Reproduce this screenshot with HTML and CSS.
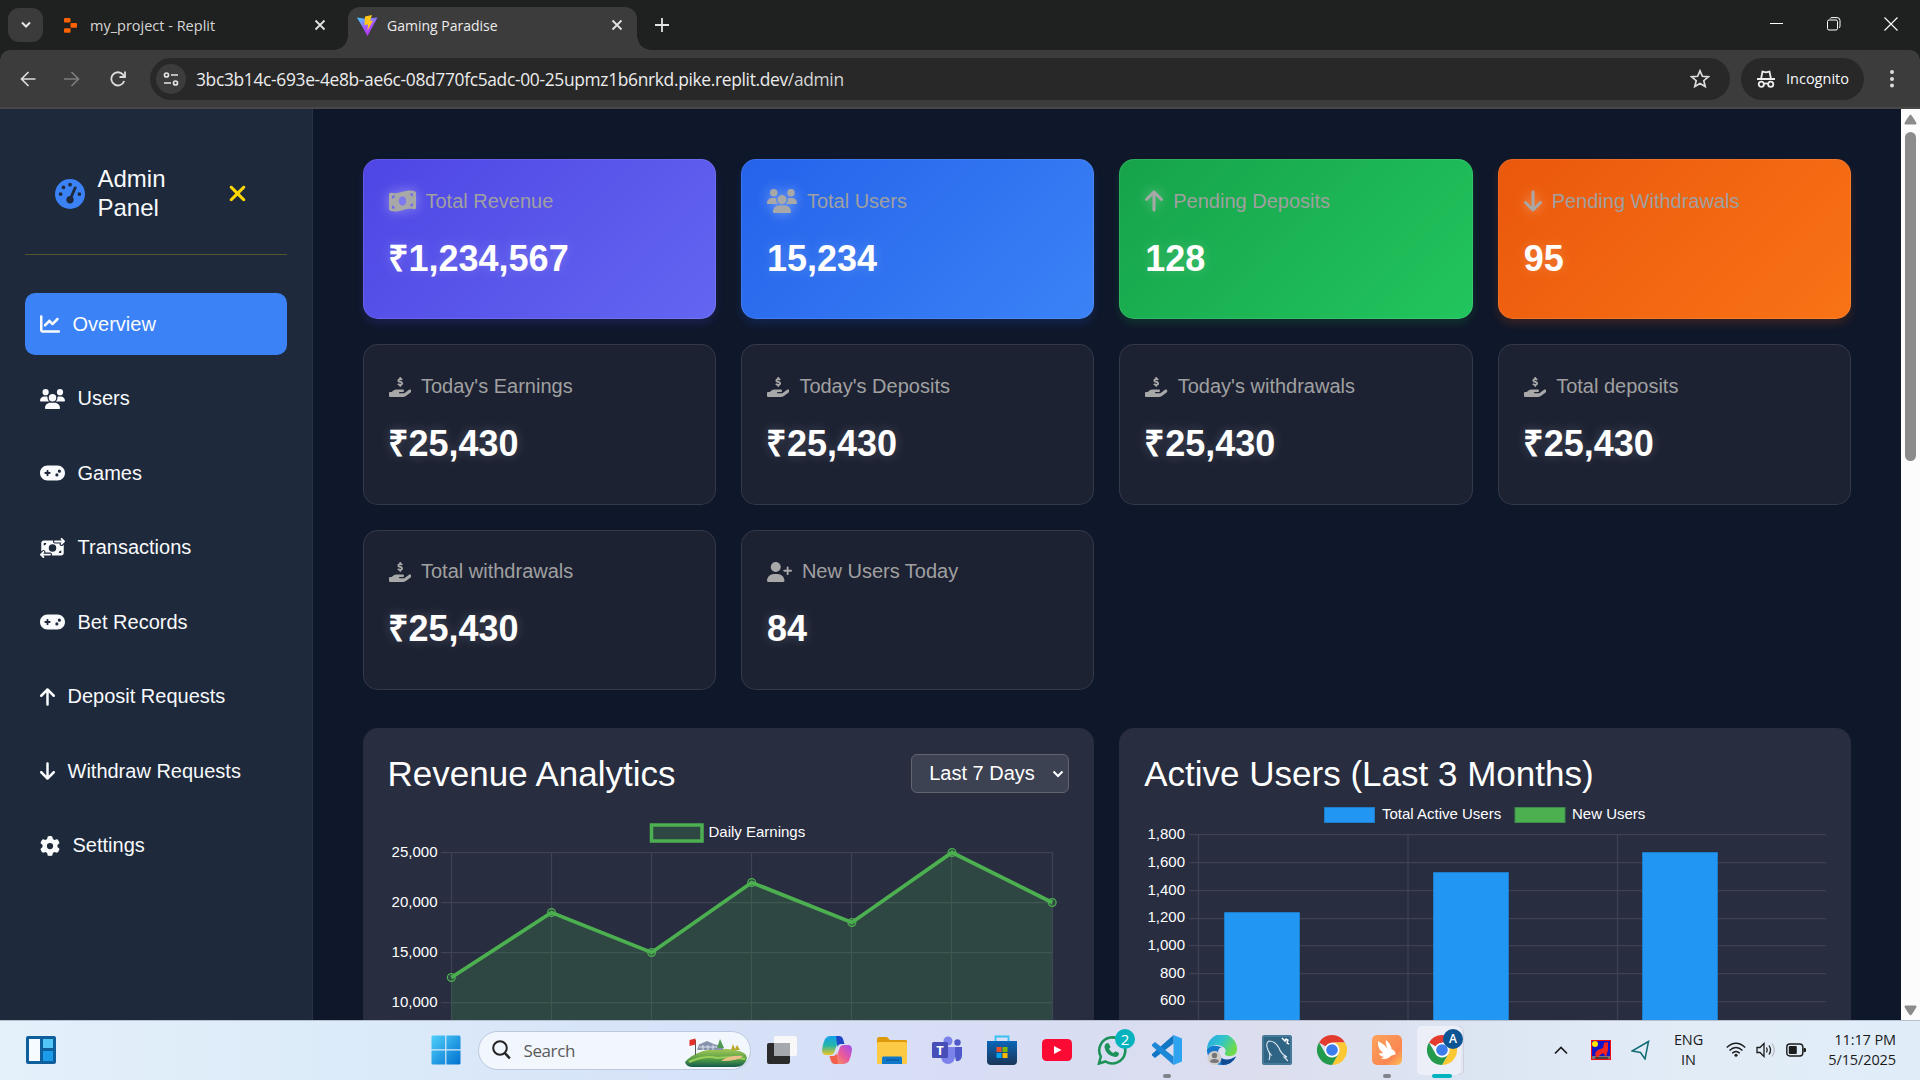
FILE: index.html
```html
<!DOCTYPE html>
<html lang="en">
<head>
<meta charset="utf-8">
<title>Gaming Paradise</title>
<link rel="stylesheet" href="styles.css">
</head>
<body>
<svg width="0" height="0" class="sprite" aria-hidden="true">
  <symbol id="gauge" viewBox="0 0 512 512"><path d="M0 256a256 256 0 1 1 512 0A256 256 0 1 1 0 256zM288 96a32 32 0 1 0 -64 0 32 32 0 1 0 64 0zM256 416c35.3 0 64-28.7 64-64c0-17.4-6.9-33.1-18.1-44.6L366 161.7c5.3-12.1-.2-26.3-12.3-31.6s-26.3 .2-31.6 12.3L257.9 288c-.6 0-1.3 0-1.9 0c-35.3 0-64 28.7-64 64s28.7 64 64 64zM176 144a32 32 0 1 0 -64 0 32 32 0 1 0 64 0zM96 288a32 32 0 1 0 0-64 32 32 0 1 0 0 64zm352-32a32 32 0 1 0 -64 0 32 32 0 1 0 64 0z"/></symbol>
  <symbol id="xmark" viewBox="0 0 384 512"><path d="M342.6 150.6c12.5-12.5 12.5-32.8 0-45.3s-32.8-12.5-45.3 0L192 210.7 86.6 105.4c-12.5-12.5-32.8-12.5-45.3 0s-12.5 32.8 0 45.3L146.7 256 41.4 361.4c-12.5 12.5-12.5 32.8 0 45.3s32.8 12.5 45.3 0L192 301.3 297.4 406.6c12.5 12.5 32.8 12.5 45.3 0s12.5-32.8 0-45.3L237.3 256 342.6 150.6z"/></symbol>
  <symbol id="chart" viewBox="0 0 512 512"><path d="M64 64c0-17.7-14.3-32-32-32S0 46.3 0 64V400c0 44.2 35.8 80 80 80H480c17.7 0 32-14.3 32-32s-14.3-32-32-32H80c-8.8 0-16-7.2-16-16V64zm406.6 86.6c12.5-12.5 12.5-32.8 0-45.3s-32.8-12.5-45.3 0L320 210.7l-57.4-57.4c-12.5-12.5-32.8-12.5-45.3 0l-112 112c-12.5 12.5-12.5 32.8 0 45.3s32.8 12.5 45.3 0L240 221.3l57.4 57.4c12.5 12.5 32.8 12.5 45.3 0l128-128z"/></symbol>
  <symbol id="users" viewBox="0 0 640 512"><path d="M144 0a80 80 0 1 1 0 160A80 80 0 1 1 144 0zM512 0a80 80 0 1 1 0 160A80 80 0 1 1 512 0zM0 298.7C0 239.8 47.8 192 106.7 192h42.7c15.9 0 31 3.5 44.6 9.7c-1.3 7.2-1.9 14.7-1.9 22.3c0 38.2 16.8 72.5 43.3 96c-.2 0-.4 0-.7 0H21.3C9.6 320 0 310.4 0 298.7zM405.3 320c-.2 0-.4 0-.7 0c26.6-23.5 43.3-57.8 43.3-96c0-7.6-.7-15-1.9-22.3c13.6-6.3 28.7-9.7 44.6-9.7h42.7C592.2 192 640 239.8 640 298.7c0 11.8-9.6 21.3-21.3 21.3H405.3zM224 224a96 96 0 1 1 192 0 96 96 0 1 1 -192 0zM128 485.3C128 411.7 187.7 352 261.3 352H378.7C452.3 352 512 411.7 512 485.3c0 14.7-11.9 26.7-26.7 26.7H154.7c-14.7 0-26.7-11.9-26.7-26.7z"/></symbol>
  <symbol id="gamepad" viewBox="0 0 640 512"><path d="M192 64C86 64 0 150 0 256S86 448 192 448H448c106 0 192-86 192-192s-86-192-192-192H192zM496 168a40 40 0 1 1 0 80 40 40 0 1 1 0-80zM392 304a40 40 0 1 1 80 0 40 40 0 1 1 -80 0zM168 200c0-13.3 10.7-24 24-24s24 10.7 24 24v32h32c13.3 0 24 10.7 24 24s-10.7 24-24 24H216v32c0 13.3-10.7 24-24 24s-24-10.7-24-24V280H136c-13.3 0-24-10.7-24-24s10.7-24 24-24h32V200z"/></symbol>
  <symbol id="transfer" viewBox="0 0 640 512"><path d="M535 41c-9.4-9.4-9.4-24.6 0-33.9s24.6-9.4 33.9 0l64 64c4.5 4.5 7 10.6 7 17s-2.5 12.5-7 17l-64 64c-9.4 9.4-24.6 9.4-33.9 0s-9.4-24.6 0-33.9l23-23L384 112c-13.3 0-24-10.7-24-24s10.7-24 24-24l174.1 0L535 41zM105 377l-23 23L256 400c13.3 0 24 10.7 24 24s-10.7 24-24 24L81.9 448l23 23c9.4 9.4 9.4 24.6 0 33.9s-24.6 9.4-33.9 0L7 441c-4.5-4.5-7-10.6-7-17s2.5-12.5 7-17l64-64c9.4-9.4 24.6-9.4 33.9 0s9.4 24.6 0 33.9zM96 64H337.9c-3.7 7.2-5.9 15.3-5.9 24c0 28.7 23.3 52 52 52l117.4 0c-4 17 .6 35.5 13.8 48.8c20.3 20.3 53.2 20.3 73.5 0L608 169.5V384c0 35.3-28.7 64-64 64H302.1c3.7-7.2 5.9-15.3 5.9-24c0-28.7-23.3-52-52-52l-117.4 0c4-17-.6-35.5-13.8-48.8c-20.3-20.3-53.2-20.3-73.5 0L32 342.5V128c0-35.3 28.7-64 64-64zm64 64H96v64c35.3 0 64-28.7 64-64zM544 320c-35.3 0-64 28.7-64 64h64V320zM320 352a96 96 0 1 0 0-192 96 96 0 1 0 0 192z"/></symbol>
  <symbol id="up" viewBox="0 0 384 512"><path d="M214.6 41.4c-12.5-12.5-32.8-12.5-45.3 0l-160 160c-12.5 12.5-12.5 32.8 0 45.3s32.8 12.5 45.3 0L160 141.2V448c0 17.7 14.3 32 32 32s32-14.3 32-32V141.2L329.4 246.6c12.5 12.5 32.8 12.5 45.3 0s12.5-32.8 0-45.3l-160-160z"/></symbol>
  <symbol id="down" viewBox="0 0 384 512"><path transform="rotate(180 192 256)" d="M214.6 41.4c-12.5-12.5-32.8-12.5-45.3 0l-160 160c-12.5 12.5-12.5 32.8 0 45.3s32.8 12.5 45.3 0L160 141.2V448c0 17.7 14.3 32 32 32s32-14.3 32-32V141.2L329.4 246.6c12.5 12.5 32.8 12.5 45.3 0s12.5-32.8 0-45.3l-160-160z"/></symbol>
  <symbol id="gear" viewBox="0 0 512 512"><path d="M495.9 166.6c3.2 8.7 .5 18.4-6.4 24.6l-43.3 39.4c1.1 8.3 1.7 16.8 1.7 25.4s-.6 17.1-1.7 25.4l43.3 39.4c6.9 6.2 9.6 15.9 6.4 24.6c-4.4 11.9-9.7 23.3-15.8 34.3l-4.7 8.1c-6.6 11-14 21.4-22.1 31.2c-5.9 7.2-15.7 9.6-24.5 6.8l-55.7-17.7c-13.4 10.3-28.2 18.9-44 25.4l-12.5 57.1c-2 9.1-9 16.3-18.2 17.8c-13.8 2.3-28 3.5-42.5 3.5s-28.7-1.2-42.5-3.5c-9.2-1.5-16.2-8.7-18.2-17.8l-12.5-57.1c-15.8-6.5-30.6-15.1-44-25.4L83.1 425.9c-8.8 2.8-18.6 .3-24.5-6.8c-8.1-9.8-15.5-20.2-22.1-31.2l-4.7-8.1c-6.1-11-11.4-22.4-15.8-34.3c-3.2-8.7-.5-18.4 6.4-24.6l43.3-39.4C64.6 273.1 64 264.6 64 256s.6-17.1 1.7-25.4L22.4 191.2c-6.9-6.2-9.6-15.9-6.4-24.6c4.4-11.9 9.7-23.3 15.8-34.3l4.7-8.1c6.6-11 14-21.4 22.1-31.2c5.9-7.2 15.7-9.6 24.5-6.8l55.7 17.7c13.4-10.3 28.2-18.9 44-25.4l12.5-57.1c2-9.1 9-16.3 18.2-17.8C227.3 1.2 241.5 0 256 0s28.7 1.2 42.5 3.5c9.2 1.5 16.2 8.7 18.2 17.8l12.5 57.1c15.8 6.5 30.6 15.1 44 25.4l55.7-17.7c8.8-2.8 18.6-.3 24.5 6.8c8.1 9.8 15.5 20.2 22.1 31.2l4.7 8.1c6.1 11 11.4 22.4 15.8 34.3zM256 336a80 80 0 1 0 0-160 80 80 0 1 0 0 160z"/></symbol>
  <symbol id="userplus" viewBox="0 0 640 512"><path d="M96 128a128 128 0 1 1 256 0A128 128 0 1 1 96 128zM0 482.3C0 383.8 79.8 304 178.3 304h91.4C368.2 304 448 383.8 448 482.3c0 16.4-13.3 29.7-29.7 29.7H29.7C13.3 512 0 498.7 0 482.3zM504 312V248H440c-13.3 0-24-10.7-24-24s10.7-24 24-24h64V136c0-13.3 10.7-24 24-24s24 10.7 24 24v64h64c13.3 0 24 10.7 24 24s-10.7 24-24 24H552v64c0 13.3-10.7 24-24 24s-24-10.7-24-24z"/></symbol>
  <symbol id="hand" viewBox="0 0 576 512"><path d="M312 24V34.5c6.4 1.2 12.6 2.7 18.2 4.2c12.8 3.4 20.4 16.6 17 29.4s-16.6 20.4-29.4 17c-10.9-2.9-21.1-4.9-30.2-5c-7.3-.1-14.7 1.7-19.4 4.4c-2.1 1.3-3.1 2.4-3.5 3c-.3 .5-.7 1.2-.7 2.8c0 .3 0 .5 0 .6c.2 .2 .9 1.2 3.3 2.6c5.8 3.5 14.4 6.2 27.4 10.1l.9 .3c11.1 3.3 25.9 7.8 37.9 15.3c13.7 8.6 26.1 22.9 26.4 44.9c.3 22.5-11.4 38.9-26.7 48.5c-6.7 4.1-13.9 7-21.3 8.8V232c0 13.3-10.7 24-24 24s-24-10.7-24-24V220.6c-9.5-2.3-18.2-5.3-25.6-7.8c-2.1-.7-4.1-1.4-6-2c-12.6-4.2-19.4-17.8-15.2-30.4s17.8-19.4 30.4-15.2c2.6 .9 5 1.7 7.3 2.5c13.6 4.6 23.4 7.9 33.9 8.3c8 .3 15.1-1.6 19.2-4.1c1.9-1.2 2.8-2.2 3.2-2.9c.4-.6 .9-1.8 .8-4.1l0-.2c0-1 0-2.1-4-4.6c-5.7-3.6-14.3-6.4-27.1-10.3l-1.9-.6c-10.8-3.2-25-7.5-36.4-14.4c-13.5-8.1-26.5-22-26.6-44.1c-.1-22.9 12.9-38.6 27.7-47.4c6.4-3.8 13.3-6.4 20.2-8.2V24c0-13.3 10.7-24 24-24s24 10.7 24 24zM568.2 336.3c13.1 17.8 9.3 42.8-8.5 55.9L433.1 485.5c-23.4 17.2-51.6 26.5-80.7 26.5H192 32c-17.7 0-32-14.3-32-32V416c0-17.7 14.3-32 32-32H68.8l44.9-36c22.7-18.2 50.9-28 80-28H272h16 64c17.7 0 32 14.3 32 32s-14.3 32-32 32H288 272c-8.8 0-16 7.2-16 16s7.2 16 16 16H392.6l119.7-88.2c17.8-13.1 42.8-9.3 55.9 8.5z"/></symbol>
  <symbol id="money" viewBox="0 0 576 512"><path d="M0 112.5V422.3c0 18 10.1 35 27 41.3c87 32.5 174 10.3 261-11.9c79.8-20.3 159.6-40.7 239.3-18.9c23 6.3 48.7-9.5 48.7-33.4V89.7c0-18-10.1-35-27-41.3C462 15.9 375 38.1 288 60.3C208.2 80.6 128.4 100.9 48.7 79.1C25.6 72.8 0 88.6 0 112.5zM288 352c-44.2 0-80-43-80-96s35.8-96 80-96s80 43 80 96s-35.8 96-80 96zM64 352c35.3 0 64 28.7 64 64H64V352zm64-208c0 35.3-28.7 64-64 64V144h64zM512 304v64H448c0-35.3 28.7-64 64-64zM448 96h64v64c-35.3 0-64-28.7-64-64z"/></symbol>
  <symbol id="tabx" viewBox="0 0 12 12"><path d="M1.5 1.5l9 9M10.5 1.5l-9 9" stroke="#e3e3e3" stroke-width="1.8" fill="none"/></symbol>
  <symbol id="chrome" viewBox="0 0 30 30">
    <path d="M15 0A15 15 0 0 1 28 7.5H15L8.5 11.2 2 7.5A15 15 0 0 1 15 0z" fill="#e33b2e"/>
    <path d="M28 7.5A15 15 0 0 1 15 30L21.5 18.8A7.5 7.5 0 0 0 15 7.5z" fill="#fcc934"/>
    <path d="M2 7.500A15 15 0 0 0 15 30L21.500 18.800A7.500 7.500 0 0 1 8.500 18.800z" fill="#249a4c"/>
    <circle cx="15" cy="15" r="7.3" fill="#fff"/><circle cx="15" cy="15" r="5.800" fill="#3b7ded"/>
  </symbol>
</svg>

<header class="tabstrip">
  <button class="tab-search"><svg width="12" height="12" viewBox="0 0 12 12"><path d="M2 3.500l4 4 4-4" fill="none" stroke="#e6e6e6" stroke-width="2"/></svg></button>
  <div class="tab">
    <svg class="fav-replit" width="13" height="15" viewBox="0 0 13 15" fill="#ff6200"><rect width="6.500" height="4.600" rx="1"/><rect x="6.500" y="5" width="6.500" height="4.800" rx="1"/><rect y="10.200" width="6.500" height="4.600" rx="1"/></svg>
    <span class="tab-title t1">my_project - Replit</span>
    <svg width="12" height="12"><use href="#tabx"/></svg>
  </div>
  <div class="tab active">
    <svg width="21" height="21" viewBox="0 0 21 21">
      <defs><linearGradient id="vg" x1="0" y1="0" x2=".6" y2="1"><stop offset="0" stop-color="#41d1ff"/><stop offset=".6" stop-color="#a653fb"/><stop offset="1" stop-color="#bd34fe"/></linearGradient></defs>
      <path d="M0 2.500L8 3.800 20.500 2.500 10.500 21z" fill="url(#vg)"/><path d="M8 1.500L15 0 13 6l3-.5L10.500 15.500 11 9.500 7.500 10z" fill="#ffc517"/>
    </svg>
    <span class="tab-title t2">Gaming Paradise</span>
    <svg width="12" height="12"><use href="#tabx"/></svg>
  </div>
  <svg class="new-tab" width="14" height="14" viewBox="0 0 14 14"><path d="M7 0v14M0 7h14" stroke="#e3e3e3" stroke-width="1.800"/></svg>
  <div class="window-buttons">
    <svg width="14" height="14" viewBox="0 0 14 14"><path d="M0 6.500h13" stroke="#fff"/></svg>
    <svg width="14" height="14" viewBox="0 0 14 14" fill="none" stroke="#fff"><rect x=".5" y="3" width="10" height="10" rx="1.500"/><path d="M3 1.700Q3.500 .6 5 .6H10Q13 .6 13 3.500V9Q13 10.500 12 11"/></svg>
    <svg width="14" height="14" viewBox="0 0 14 14"><path d="M.5.5l13 13M13.500.5l-13 13" stroke="#fff" stroke-width="1.100"/></svg>
  </div>
</header>

<nav class="toolbar">
  <svg class="nav-back" width="16" height="16" viewBox="0 0 16 16" fill="none" stroke="#dcdcdc" stroke-width="1.700"><path d="M15.500 8H2M8.500 1L1.500 8l7 7"/></svg>
  <svg class="nav-fwd" width="16" height="16" viewBox="0 0 16 16" fill="none" stroke="#7d7d7d" stroke-width="1.700"><path d="M0 8H14M7.500 1l7 7-7 7"/></svg>
  <svg class="nav-reload" width="16" height="16" viewBox="0 0 16 16" fill="none" stroke="#dcdcdc" stroke-width="1.800"><path d="M14.200 10A6.600 6.600 0 1 1 13 3.600L14.500 5.500"/><path d="M15 .5V6H9.500"/></svg>
  <div class="url-box">
    <span class="tune"><svg width="16" height="16" viewBox="0 0 16 16" fill="none" stroke="#e3e3e3" stroke-width="1.700"><circle cx="3.500" cy="4" r="2"/><path d="M8 4h7M1 12h7"/><circle cx="12.500" cy="12" r="2"/></svg></span>
    <span class="url">3bc3b14c-693e-4e8b-ae6c-08d770fc5adc-00-25upmz1b6nrkd.pike.replit.dev<span class="path">/admin</span></span>
    <svg class="star" width="20" height="19" viewBox="0 0 20 19"><path d="M10 1.800l2.400 5.500 5.900.5-4.500 3.900 1.400 5.800L10 14.400l-5.200 3.100 1.400-5.800L1.700 7.800l5.900-.5z" fill="none" stroke="#dcdcdc" stroke-width="1.700"/></svg>
  </div>
  <div class="incognito">
    <svg width="18" height="18" viewBox="0 0 18 18" fill="none" stroke="#ededed" stroke-width="1.800"><path d="M0 9h18M4 9L5.500 1.500 9 2.300 12.500 1.500 14 9M7 14Q9 12.800 11 14"/><circle cx="4.300" cy="14.200" r="2.600"/><circle cx="13.700" cy="14.200" r="2.600"/></svg>
    <span>Incognito</span>
  </div>
  <svg class="dots" width="6" height="20" viewBox="0 0 6 20" fill="#dcdcdc"><circle cx="3" cy="3" r="2"/><circle cx="3" cy="10" r="2"/><circle cx="3" cy="16.500" r="2"/></svg>
</nav>

<div class="page">
  <aside class="sidebar">
    <div class="brand">
      <svg class="brand-icon"><use href="#gauge"/></svg>
      <h2>Admin Panel</h2>
      <svg class="brand-close"><use href="#xmark"/></svg>
    </div>
    <ul class="menu">
      <li class="current"><svg class="w20"><use href="#chart"/></svg>Overview</li>
      <li><svg class="w25"><use href="#users"/></svg>Users</li>
      <li><svg class="w25"><use href="#gamepad"/></svg>Games</li>
      <li><svg class="w25"><use href="#transfer"/></svg>Transactions</li>
      <li><svg class="w25"><use href="#gamepad"/></svg>Bet Records</li>
      <li><svg class="w15"><use href="#up"/></svg>Deposit Requests</li>
      <li><svg class="w15"><use href="#down"/></svg>Withdraw Requests</li>
      <li><svg class="w20"><use href="#gear"/></svg>Settings</li>
    </ul>
  </aside>

  <main class="content">
    <section class="stats">
      <article class="card glow purple"><h3><svg class="b27"><use href="#money"/></svg>Total Revenue</h3><p class="rupee">₹1,234,567</p></article>
      <article class="card glow blue"><h3><svg class="b30"><use href="#users"/></svg>Total Users</h3><p>15,234</p></article>
      <article class="card glow green"><h3><svg class="b18"><use href="#up"/></svg>Pending Deposits</h3><p>128</p></article>
      <article class="card glow orange"><h3><svg class="b18"><use href="#down"/></svg>Pending Withdrawals</h3><p>95</p></article>
      <article class="card"><h3><svg class="w22"><use href="#hand"/></svg>Today's Earnings</h3><p class="rupee">₹25,430</p></article>
      <article class="card"><h3><svg class="w22"><use href="#hand"/></svg>Today's Deposits</h3><p class="rupee">₹25,430</p></article>
      <article class="card"><h3><svg class="w22"><use href="#hand"/></svg>Today's withdrawals</h3><p class="rupee">₹25,430</p></article>
      <article class="card"><h3><svg class="w22"><use href="#hand"/></svg>Total deposits</h3><p class="rupee">₹25,430</p></article>
      <article class="card"><h3><svg class="w22"><use href="#hand"/></svg>Total withdrawals</h3><p class="rupee">₹25,430</p></article>
      <article class="card"><h3><svg class="w25"><use href="#userplus"/></svg>New Users Today</h3><p>84</p></article>
    </section>

    <section class="charts">
      <article class="chart-card">
        <div class="chart-head"><h3>Revenue Analytics</h3>
          <div class="select"><span>Last 7 Days</span><svg width="12" height="8" viewBox="0 0 12 8"><path d="M1.500 1.500L6 6l4.500-4.500" fill="none" stroke="#fff" stroke-width="2"/></svg></div>
        </div>
        <svg class="plot line-plot" width="682" height="260" viewBox="388 813 682 260">
          <g class="grid">
            <path d="M441 852.500H1052M441 902.500H1052M441 952.500H1052M441 1002.500H1052M451.500 852V1073M551.500 852V1073M651.500 852V1073M751.500 852V1073M851.500 852V1073M951.500 852V1073M1052.500 852V1073"/>
          </g>
          <path d="M451.300 977.500L551.500 912.500 651.600 952.500 751.700 882.500 851.900 922.500 952 852.500 1052.200 902.500V1073H451.300z" fill="#4caf50" fill-opacity=".2"/>
          <path d="M451.300 977.500L551.500 912.500 651.600 952.500 751.700 882.500 851.900 922.500 952 852.500 1052.200 902.500" fill="none" stroke="#4caf50" stroke-width="3.750"/>
          <g fill="#4caf50" fill-opacity=".2" stroke="#4caf50" stroke-width="1.250"><circle cx="451.300" cy="977.500" r="3.900"/><circle cx="551.500" cy="912.500" r="3.900"/><circle cx="651.600" cy="952.500" r="3.900"/><circle cx="751.700" cy="882.500" r="3.900"/><circle cx="851.900" cy="922.500" r="3.900"/><circle cx="952" cy="852.500" r="3.900"/><circle cx="1052.200" cy="902.500" r="3.900"/></g>
          <rect x="651.500" y="825" width="50.500" height="16" fill="#4caf50" fill-opacity=".2" stroke="#4caf50" stroke-width="3.500"/>
          <g class="labels">
            <text x="708.500" y="837">Daily Earnings</text>
            <text class="end" x="437.500" y="857">25,000</text><text class="end" x="437.500" y="907">20,000</text><text class="end" x="437.500" y="957">15,000</text><text class="end" x="437.500" y="1007">10,000</text>
          </g>
        </svg>
      </article>
      <article class="chart-card">
        <div class="chart-head"><h3>Active Users (Last 3 Months)</h3></div>
        <svg class="plot bar-plot" width="682" height="260" viewBox="1144 800 682 260">
          <g class="grid">
            <path d="M1189 834.500H1826M1189 862.500H1826M1189 890.500H1826M1189 918.500H1826M1189 945.500H1826M1189 973.500H1826M1189 1001.500H1826M1198.500 834V1060M1408 834V1060M1617.500 834V1060"/>
          </g>
          <g fill="#2196f3" stroke="#1f7cc9" stroke-width="1"><path d="M1224.500 1060V912.500H1299.500V1060M1433.500 1060V872.500H1508.500V1060M1642.500 1060V852.500H1717.500V1060"/>
            <rect x="1324.500" y="807.500" width="50" height="15"/></g>
          <rect x="1515" y="807.500" width="50" height="15" fill="#4caf50" stroke="#3d8a4a"/>
          <g class="labels">
            <text x="1382" y="819">Total Active Users</text><text x="1572" y="819">New Users</text>
            <text class="end" x="1185" y="839">1,800</text><text class="end" x="1185" y="867">1,600</text><text class="end" x="1185" y="895">1,400</text><text class="end" x="1185" y="922">1,200</text><text class="end" x="1185" y="950">1,000</text><text class="end" x="1185" y="978">800</text><text class="end" x="1185" y="1005">600</text>
          </g>
        </svg>
      </article>
    </section>
  </main>

  <div class="scrollbar">
    <svg width="13" height="11" viewBox="0 0 13 11"><path d="M6.500 .5Q7.500 .5 12.500 9 12.500 10.500 11.500 10.500H1.500Q.5 10.500 .5 9 5.500 .5 6.500 .5z" fill="#8b8b8b"/></svg>
    <div class="thumb"></div>
    <svg class="arrow-down" width="13" height="11" viewBox="0 0 13 11"><path d="M6.500 10.500Q7.500 10.500 12.500 2 12.500 .5 11.500 .5H1.500Q.5 .5 .5 2 5.500 10.500 6.500 10.500z" fill="#8b8b8b"/></svg>
  </div>
</div>

<footer class="taskbar">
  <svg class="widgets" width="30" height="30" viewBox="0 0 30 30"><rect x="0" y="1" width="30" height="28" rx="2" fill="#0f5f9c"/><rect x="3" y="4" width="11" height="22" fill="#f5fbff"/><rect x="17" y="4" width="10" height="9" fill="#52c7f5"/><rect x="17" y="16" width="10" height="10" fill="#1c9ce8"/></svg>
  <svg class="start" width="30" height="30" viewBox="0 0 30 30"><defs><linearGradient id="wg" x1="0" y1="0" x2="1" y2="1"><stop offset="0" stop-color="#4fd0fb"/><stop offset="1" stop-color="#0070cf"/></linearGradient></defs><path d="M1.500 .5H14.200V14.200H.5V1.500zM15.400 .5H28.500L29.500 1.500V14.200H15.400zM.5 15.400H14.200V29.500H1.500L.5 28.500zM15.400 15.400H29.500V28.500L28.500 29.500H15.400z" fill="url(#wg)"/></svg>
  <div class="search">
    <svg width="19" height="20" viewBox="0 0 19 20"><circle cx="8" cy="8" r="6.800" fill="none" stroke="#222" stroke-width="2"/><path d="M12.800 13l5 5.500" stroke="#222" stroke-width="2.600"/></svg>
    <span>Search</span>
    <svg class="golf" width="62" height="30" viewBox="0 0 62 30">
      <defs><linearGradient id="gg" x1="0" y1="0" x2="0" y2="1"><stop offset="0" stop-color="#a7c957"/><stop offset=".6" stop-color="#4f9a45"/><stop offset="1" stop-color="#14594e"/></linearGradient></defs>
      <path d="M0 24Q6 17 18 13 34 9 50 12 62 14 62 20 60 29 50 29H8Q1 29 0 24z" fill="url(#gg)"/>
      <path d="M4 24Q20 17 32 20 46 18 60 21" fill="none" stroke="#9ccf5a" stroke-width="2"/><path d="M36 23Q44 17 58 18 54 23 36 23z" fill="#ecc08b"/>
      <path d="M12 12L14 6.500 22 3 30 6.500 38 8V12z" fill="#8793ab"/><path d="M14 9h22M18 7v5M23 7v5M28 7v5" stroke="#dbe3ef"/><path d="M35 1l4 9h-7z" fill="#4c9a52"/><path d="M46 12l2-6 2 5 2-4 3 5z" fill="#b9a92b"/>
      <path d="M10.500 2V17" stroke="#555"/><path d="M4.500 2l6-1.500v6l-6 1.500z" fill="#e2302a"/>
    </svg>
  </div>
  <div class="apps">
    <div class="slot"><svg width="30" height="30" viewBox="0 0 30 30"><rect x="0" y="8" width="23" height="21" rx="2" fill="#2b2b2b"/><rect x="7" y="1" width="23" height="20" rx="2" fill="#f8f8f8"/><rect x="7" y="8" width="16" height="13" fill="#a5a8ac"/></svg></div>
    <div class="slot"><svg width="30" height="30" viewBox="0 0 30 30"><defs><linearGradient id="c1" x1="0" y1="0" x2="0" y2="1"><stop offset="0" stop-color="#16a0ee"/><stop offset=".5" stop-color="#25b6a8"/><stop offset="1" stop-color="#f0c51f"/></linearGradient><linearGradient id="c2" x1="1" y1="0" x2="0" y2="1"><stop offset="0" stop-color="#a14cf0"/><stop offset=".5" stop-color="#e8589e"/><stop offset="1" stop-color="#fd9a52"/></linearGradient></defs>
      <path d="M8 1H18L12 18Q11 20 8 20H4Q0 20 0 15Q1 8 3 4 5 1 8 1z" fill="url(#c1)"/><path d="M14 1H17Q20 1 21 4L22.500 9H19Q16.500 9 15.500 12z" fill="#1e48c8"/><path d="M22 29H12L18 12Q19 10 22 10H26Q30 10 30 15 29 22 27 26 25 29 22 29z" fill="url(#c2)"/><path d="M16 29H13Q10 29 9 26L7.500 21H11Q13.500 21 14.500 18z" fill="#f25f4b"/></svg></div>
    <div class="slot"><svg width="30" height="30" viewBox="0 0 30 30"><path d="M0 4Q0 2 2 2H10L13 5H29Q30 5 30 7V12H0z" fill="#dd9a0b"/><rect y="7" width="30" height="22" rx="1.500" fill="#fdca45"/><path d="M5 29V23Q5 21.500 6.500 21.500H23.500Q25 21.500 25 23V29z" fill="#0f78c8"/><path d="M9 25h13" stroke="#0b4f8e"/></svg></div>
    <div class="slot"><svg width="30" height="30" viewBox="0 0 30 30"><circle cx="16" cy="6" r="4.500" fill="#7b83eb"/><circle cx="25.500" cy="7.500" r="3.200" fill="#5059c9"/><path d="M21 12h9v9q-1 6-6 5z" fill="#5059c9"/><path d="M9 12h14v10q-1 7-7 7t-7-7z" fill="#7b83eb"/><rect y="7" width="16" height="16" rx="1.500" fill="#464eb8"/><text class="teams-t" x="8" y="20">T</text></svg></div>
    <div class="slot"><svg width="30" height="30" viewBox="0 0 30 30"><defs><linearGradient id="sg" x1="0" y1="0" x2="0" y2="1"><stop offset="0" stop-color="#0a66b8"/><stop offset="1" stop-color="#1b3558"/></linearGradient></defs><path d="M8.500 6V1.500h13V6" fill="none" stroke="#35c1f1" stroke-width="1.800"/><path d="M0 6H30V26Q30 30 26 30H4Q0 30 0 26z" fill="url(#sg)"/><path d="M9.500 12h5v5h-5z" fill="#f25022"/><path d="M15.500 12h5v5h-5z" fill="#7fba00"/><path d="M9.500 18h5v5h-5z" fill="#00a4ef"/><path d="M15.500 18h5v5h-5z" fill="#ffb900"/></svg></div>
    <div class="slot"><svg width="30" height="30" viewBox="0 0 30 30"><rect y="4" width="30" height="22" rx="4.500" fill="#fb0a33"/><path d="M12 11l7.500 4-7.500 4z" fill="#fff"/></svg></div>
    <div class="slot"><svg width="30" height="30" viewBox="0 0 30 30"><path d="M2 28.500L3.800 21.500A13 13 0 1 1 8.500 26.500z" fill="none" stroke="#1c9259" stroke-width="2.600"/><path d="M9 8.500l2.500-.5 2 4-1.500 2q2 3 4.500 4l2-1.800 3.500 1.800q0 4-4 4-9-1.500-10.500-9.500 0-3 1.500-4z" fill="#1c9259"/></svg><span class="badge">2</span></div>
    <div class="slot"><svg width="30" height="30" viewBox="0 0 30 30"><path d="M21.500 0L30 3.500V26.500L21.500 30z" fill="#2ea3ef"/><path d="M21.500 0V8.500L3 23 0 20.500V19z" fill="#1176c4"/><path d="M21.500 30V21.500L3 7 0 9.500V11z" fill="#1e88d8"/></svg><i class="mark"></i></div>
    <div class="slot"><svg width="30" height="30" viewBox="0 0 30 30"><defs><linearGradient id="e1" x1="0" y1="0" x2="1" y2=".5"><stop offset="0" stop-color="#2aa5e5"/><stop offset=".5" stop-color="#2fc3cf"/><stop offset="1" stop-color="#6edb4a"/></linearGradient></defs><path d="M0 14A15 15 0 0 0 15 30Q25 30 29 21.500 22 25 17 21 14 18 16 13 6 8 0 14z" fill="#1479cc"/><path d="M0 14A15 15 0 0 1 30 14Q30 21 23 21 18 21 17.500 19 20 15 16 12 9 7 0 14z" fill="url(#e1)"/><path d="M11 18Q11 12 16 12 20 14 17.500 19 18 21 23 22 27 22 29 21 26 25 22 25 13 25 11 18z" fill="#dbe1f2"/><path d="M13 23Q20 27 29 21.500 25 30 15 30z" fill="#114b94"/><circle cx="7.500" cy="23" r="7" fill="#d0cdca"/><circle cx="7.500" cy="20.500" r="2.700" fill="#777"/><path d="M3 27Q3 24 7.500 24T12 27Q8 29 3 27z" fill="#777"/></svg></div>
    <div class="slot"><svg width="30" height="30" viewBox="0 0 30 30"><rect width="30" height="30" rx="2.500" fill="#2f6485"/><rect x="1" y="1" width="28" height="28" rx="2" fill="none" stroke="#5f8cab"/><path d="M7 25Q9 20 6 15 3 8 7 6 13 6 17 13 19 19 25 22L22 22 26 26M6 15Q9 21 10 20" fill="none" stroke="#dce8f2" stroke-width="1.100"/><path d="M20 3l3 3 1-2 2 1-1 3 2 1" fill="none" stroke="#fff" stroke-width="1.400"/></svg></div>
    <div class="slot"><svg width="30" height="30"><use href="#chrome"/></svg></div>
    <div class="slot"><svg width="30" height="30" viewBox="0 0 30 30"><defs><linearGradient id="pg" x1="0" y1="0" x2="1" y2="1"><stop offset="0" stop-color="#fba45c"/><stop offset=".7" stop-color="#fa8750"/><stop offset="1" stop-color="#fdc15a"/></linearGradient></defs><rect width="30" height="30" rx="5" fill="url(#pg)"/><path d="M6 6Q12 9 16 14 13 9 14 5 19 9 19.500 14 24 16 23.500 19.500 19 20 17 22.500 13 25 9 23.500L12 22Q7 20.500 7 18.500L11 18Q5 13 6 6z" fill="#fff"/></svg><i class="mark"></i></div>
    <div class="slot open"><svg width="30" height="30"><use href="#chrome"/></svg><span class="badge profile">A</span><i class="mark wide"></i></div>
  </div>
  <div class="tray">
    <svg class="chev" width="14" height="9" viewBox="0 0 14 9"><path d="M1 7.500L7 1.500l6 6" fill="none" stroke="#1b1b1b" stroke-width="1.700"/></svg>
    <svg class="game" width="20" height="20" viewBox="0 0 20 20"><rect width="20" height="20" fill="#f30d0d"/><rect x="1" y="1" width="18" height="18" fill="#1414c8"/><circle cx="4" cy="4" r="3" fill="#ffe600"/><path d="M1 16h18v3H1z" fill="#777"/><path d="M6 18Q2 13 7 10L12 8 13 3 17 2V10L15 17 12 13 9 15z" fill="#f5261e"/><path d="M4 18h13" stroke="#111"/></svg>
    <svg class="send" width="19" height="20" viewBox="0 0 19 20"><path d="M17.500 1.500L1 11 9.500 12.500 14 19z" fill="none" stroke="#0f6b74" stroke-width="1.500"/></svg>
    <div class="lang"><span>ENG</span><span>IN</span></div>
    <svg class="wifi" width="20" height="16" viewBox="0 0 20 16" fill="none" stroke="#1b1b1b" stroke-width="1.400"><path d="M.8 5.500Q10-2.800 19.200 5.500M3.500 8.500Q10 2.500 16.500 8.500M6.200 11.300Q10 7.700 13.800 11.300"/><circle cx="10" cy="13.300" r="1.500" fill="#1b1b1b" stroke="none"/></svg>
    <svg class="vol" width="20" height="16" viewBox="0 0 20 16" fill="none" stroke="#1b1b1b" stroke-width="1.300"><path d="M1 5.500H4L8 1.500V14.500L4 10.500H1z"/><path d="M10.500 5.500Q12 8 10.500 10.500M13 3.500Q16 8 13 12.500"/><path d="M16 1.500Q20.500 8 16 14.500" stroke="#b7bcc4"/></svg>
    <svg class="bat" width="20" height="14" viewBox="0 0 20 14"><rect x=".8" y="1" width="16" height="12" rx="3" fill="none" stroke="#1b1b1b" stroke-width="1.400"/><rect x="2.800" y="3" width="8" height="8" rx="1" fill="#1b1b1b"/><path d="M17.500 4.500L20 5.500V8.500L17.500 9.500z" fill="#1b1b1b"/></svg>
    <div class="clock"><span>11:17 PM</span><span>5/15/2025</span></div>
  </div>
</footer>
</body>
</html>
```
FILE: styles.css
```css
* { box-sizing: border-box; margin: 0; padding: 0; }

body {
  width: 1920px;
  height: 1080px;
  overflow: hidden;
  display: flex;
  flex-direction: column;
  background: #0f172a;
  font-family: "Liberation Sans", Arial, sans-serif;
  color: #f8fafc;
}

.sprite { position: absolute; }
svg { flex: none; display: block; }

/* browser tab strip */
.tabstrip {
  height: 50px;
  flex: none;
  display: flex;
  padding-left: 8px;
  background: #1f2120;
  font-family: "Open Sans", "Noto Sans", sans-serif;
  font-size: 14px;
}
.tab-search {
  width: 35px;
  height: 34px;
  margin-top: 8px;
  border: 0;
  border-radius: 11px;
  background: #3b3b3b;
  display: flex;
  align-items: center;
  justify-content: center;
}
.tab {
  width: 305px;
  height: 36px;
  margin-top: 7px;
  padding: 0 22px 0 21px;
  display: flex;
  align-items: center;
  color: #d6d6d6;
}
.tab-title { flex: 1; white-space: nowrap; }
.t1 { margin-left: 13px; font-size: 14.500px; }
.t2 { margin-left: 9px; }
.tab.active {
  position: relative;
  width: 289px;
  height: 43px;
  padding: 0 14px 7px 9px;
  border-radius: 12px 12px 0 0;
  background: #3c3c3c;
  color: #ececec;
}
.tab.active::before,
.tab.active::after {
  content: "";
  position: absolute;
  bottom: 0;
  width: 14px;
  height: 14px;
}
.tab.active::before { left: -14px; background: radial-gradient(circle at 0 0, transparent 13.5px, #3c3c3c 14px); }
.tab.active::after { right: -14px; background: radial-gradient(circle at 100% 0, transparent 13.5px, #3c3c3c 14px); }
.new-tab { margin: 18px 0 0 18px; }
.window-buttons {
  margin-left: auto;
  padding: 17px 22px 0 0;
  display: flex;
  gap: 43px;
}

/* address row */
.toolbar {
  height: 59px;
  flex: none;
  display: flex;
  align-items: center;
  padding-left: 20px;
  background: radial-gradient(circle at 10px 10px, #3c3c3c 9.5px, #1f2120 10px) 0 0 / 10px 10px no-repeat,
    radial-gradient(circle at 0 10px, #3c3c3c 9.5px, #1f2120 10px) 100% 0 / 10px 10px no-repeat,
    #3c3c3c;
  border-bottom: 2px solid #484848;
  font-family: "Open Sans", "Noto Sans", sans-serif;
}
.nav-fwd { margin-left: 28px; }
.nav-reload { margin-left: 30px; }
.url-box {
  width: 1580px;
  height: 42px;
  margin-left: 24px;
  padding: 0 20px 0 6px;
  border-radius: 21px;
  background: #282828;
  display: flex;
  align-items: center;
}
.tune {
  width: 30px;
  height: 30px;
  border-radius: 50%;
  background: #3c3c3c;
  display: flex;
  align-items: center;
  justify-content: center;
}
.url { flex: 1; margin-left: 10px; font-size: 17.400px; letter-spacing: -.33px; color: #ececec; white-space: nowrap; }
.path { color: #d4d4d4; }
.incognito {
  width: 123px;
  height: 42px;
  margin-left: 11px;
  padding-left: 16px;
  border-radius: 21px;
  background: #282828;
  display: flex;
  align-items: center;
  gap: 11px;
  font-size: 14.500px;
}
.dots { margin-left: 25px; }

/* page */
.page { flex: 1; min-height: 0; display: flex; overflow: hidden; }

.sidebar {
  width: 312.500px;
  flex: none;
  padding: 50px 25px 0;
  background: #1e293b;
  border-right: 1px solid #283447;
}
.brand {
  height: 96px;
  padding: 0 40px 26px 30px;
  border-bottom: 1px solid rgba(255, 215, 0, .25);
  display: flex;
  align-items: center;
}
.brand h2 { width: 90px; margin: -2px 0 0 12.500px; font-size: 24px; line-height: 29px; font-weight: 400; }
.brand-icon { width: 30px; height: 30px; fill: #3b82f6; }
.brand-close { width: 19px; height: 25px; margin-left: auto; fill: #ffd700; }
.menu { margin-top: 38px; list-style: none; display: flex; flex-direction: column; gap: 12.500px; }
.menu li {
  height: 62px;
  padding-left: 15px;
  border-radius: 10px;
  display: flex;
  align-items: center;
  gap: 12.500px;
  font-size: 20px;
}
.menu .current { background: #3b82f6; }
.menu svg { height: 20px; fill: #f8fafc; }
.w15 { width: 15px; }
.w20 { width: 20px; }
.w22 { width: 22.500px; }
.w25 { width: 25px; }
.b18 { width: 18px; }
.b27 { width: 27px; }
.b30 { width: 30px; }

.content { flex: 1; min-width: 0; padding: 50px; }
.stats { display: grid; grid-template-columns: repeat(4, 1fr); gap: 25px; }
.card {
  height: 160.400px;
  padding: 25px;
  border: 1px solid rgba(255, 255, 255, .1);
  border-radius: 15px;
  background: #1d2233;
}
.card h3 {
  height: 32.400px;
  display: flex;
  align-items: center;
  gap: 10px;
  font-size: 20px;
  font-weight: 400;
  color: #a0a0a0;
}
.card h3 svg { height: 20px; fill: #a8a8a8; }
.card p {
  margin-top: 12.200px;
  font-size: 36px;
  line-height: 58px;
  font-weight: 700;
  color: #fff;
  text-shadow: 0 0 12px rgba(255, 255, 255, .2);
}
.card .rupee { margin-left: -1px; }
.glow h3 svg { height: 24px; overflow: visible; filter: drop-shadow(0 0 6px rgba(255, 255, 255, .4)); }
.glow { background-origin: border-box; }
.purple { background-image: linear-gradient(135deg, #4f46e5, #6366f1); box-shadow: 0 5px 8px rgba(79, 70, 229, .18); }
.blue { background-image: linear-gradient(135deg, #2563eb, #3b82f6); box-shadow: 0 5px 8px rgba(37, 99, 235, .18); }
.green { background-image: linear-gradient(135deg, #16a34a, #22c55e); box-shadow: 0 5px 8px rgba(22, 163, 74, .18); }
.orange { background-image: linear-gradient(135deg, #ea580c, #f97316); box-shadow: 0 5px 8px rgba(234, 88, 12, .18); }

.charts { margin-top: 37.800px; display: grid; grid-template-columns: 1fr 1fr; gap: 25px; }
.chart-card { height: 450px; padding: 26px 25px 25px; border-radius: 15px; background: #282d3f; overflow: hidden; }
.chart-head { height: 40px; display: flex; align-items: center; justify-content: space-between; }
.chart-head h3 { font-size: 35px; font-weight: 400; line-height: 42px; color: #fff; }
.select {
  width: 158px;
  height: 39px;
  padding: 0 4px 0 17px;
  border: 1px solid #61656f;
  border-radius: 6px;
  background: #3d4252;
  display: flex;
  align-items: center;
  justify-content: space-between;
  font-size: 20px;
  color: #fff;
}
.line-plot { margin-top: 19px; }
.bar-plot { margin-top: 6px; }
.grid { fill: none; stroke: rgba(255, 255, 255, .1); stroke-width: 1.250; }
.labels { fill: #fff; font-size: 15px; }
.end { text-anchor: end; }

.scrollbar {
  width: 19px;
  flex: none;
  padding: 5px 0 4px;
  background: #fcfcfc;
  display: flex;
  flex-direction: column;
  align-items: center;
}
.thumb { width: 11px; height: 329px; margin-top: 7px; border-radius: 6px; background: #8b8b8b; }
.arrow-down { margin-top: auto; }

/* taskbar */
.taskbar {
  height: 60px;
  flex: none;
  padding: 0 24px 1px 26px;
  border-top: 1px solid #b8bfd0;
  background: linear-gradient(90deg, #e4f0fa 0, #dcebf9 18%, #d6e3f8 34%, #d7ddf5 50%, #dcdeee 66%, #dce4f2 76%, #e2ecf7 88%, #e0edf8 100%);
  display: flex;
  align-items: center;
  font-family: "Open Sans", "Noto Sans", sans-serif;
  color: #1b1b1b;
}
.start { margin-left: 374.500px; }
.search {
  width: 273px;
  height: 39px;
  margin-left: 17px;
  padding: 0 3px 0 13px;
  border: 1px solid #bcc8df;
  border-radius: 20px;
  background: #f2f6fd;
  display: flex;
  align-items: center;
  font-size: 17px;
  color: #5a5a5a;
}
.search span { margin-left: 13px; letter-spacing: -.4px; }
.golf { margin-left: auto; margin-top: 5px; }
.apps { margin-left: 3.500px; display: flex; }
.slot { position: relative; width: 55px; height: 58px; display: flex; align-items: center; justify-content: center; }
.teams-t { fill: #fff; font-size: 13px; font-weight: 700; text-anchor: middle; }
.badge {
  position: absolute;
  top: 8px;
  left: 31px;
  width: 20px;
  height: 20px;
  border-radius: 50%;
  background: #04b3bd;
  color: #fff;
  font-size: 15px;
  line-height: 20px;
  text-align: center;
}
.profile { left: 29px; background: #0d5494; font-size: 12px; font-weight: 600; z-index: 1; }
.mark { position: absolute; bottom: 1px; left: 24px; width: 8px; height: 4px; border-radius: 2px; background: #7f838c; }
.wide { left: 18px; width: 20px; background: #04b3bd; }
.open::before {
  content: "";
  position: absolute;
  inset: 5px 8px 4px 3px;
  border-radius: 5px;
  background: #eceff8;
  box-shadow: 3px 0 0 -1px #e3e6f0, 3px 0 0 0 #cdd2e0;
}
.open svg { position: relative; }
.tray { flex: 1; margin-left: 84.500px; display: flex; align-items: center; }
.game { margin-left: 23px; }
.send { margin-left: 20px; }
.lang { width: 40px; margin-left: 19px; text-align: center; }
.lang, .clock { display: flex; flex-direction: column; font-size: 14.500px; line-height: 20px; letter-spacing: -.1px; }
.wifi { margin-left: 17px; }
.vol, .bat { margin-left: 10px; }
.clock { margin-left: auto; text-align: right; white-space: nowrap; }
```
